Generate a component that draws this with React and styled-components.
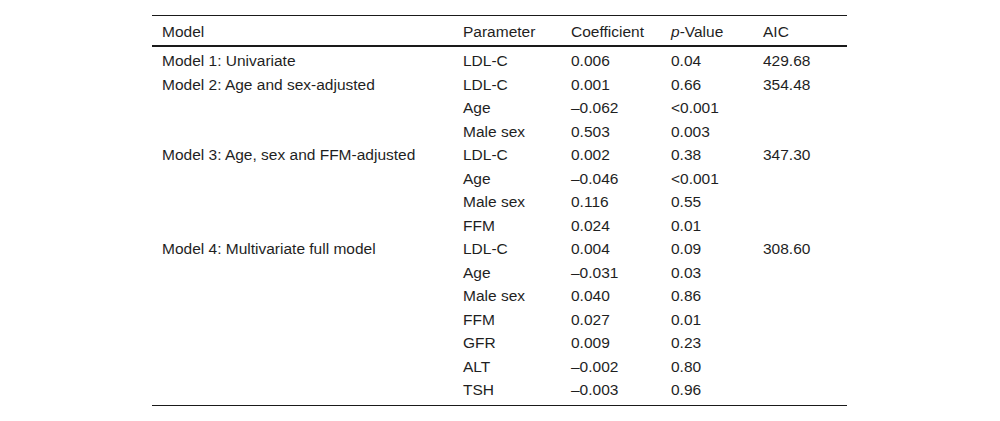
import React from 'react';
import styled, { createGlobalStyle } from 'styled-components';

const GlobalStyle = createGlobalStyle`
  html, body {
    margin: 0;
    padding: 0;
    background: #fff;
  }
  body {
    font-family: "Liberation Sans", Arial, sans-serif;
    color: #1f1f1f;
  }
`;

const Page = styled.div`
  width: 1000px;
  height: 421px;
  padding-top: 15px;
  box-sizing: border-box;
  display: flex;
  justify-content: center;
`;

const Table = styled.table`
  width: 695px;
  margin-left: -1px;
  border-collapse: collapse;
  table-layout: fixed;
  font-size: 15.5px;
  border-top: 1px solid #1a1a1a;
  border-bottom: 1px solid #1a1a1a;
  align-self: flex-start;
`;

const HeadCell = styled.th`
  text-align: left;
  font-weight: normal;
  padding: 7px 10px 4px 10px;
  line-height: 18px;
  border-bottom: 2px solid #1a1a1a;
`;

const Cell = styled.td`
  padding: 3px 10px;
  line-height: 17.5px;
  vertical-align: top;
  white-space: nowrap;
`;

const Row = styled.tr`
  &:first-child ${Cell} {
    padding-top: 5px;
  }
  &:last-child ${Cell} {
    padding-bottom: 6px;
  }
`;

const Italic = styled.i`
  font-style: italic;
`;

const columns = [301, 108, 100, 92, 94];

const models = [
  {
    name: 'Model 1: Univariate',
    aic: '429.68',
    rows: [['LDL-C', '0.006', '0.04']],
  },
  {
    name: 'Model 2: Age and sex-adjusted',
    aic: '354.48',
    rows: [
      ['LDL-C', '0.001', '0.66'],
      ['Age', '\u20130.062', '<0.001'],
      ['Male sex', '0.503', '0.003'],
    ],
  },
  {
    name: 'Model 3: Age, sex and FFM-adjusted',
    aic: '347.30',
    rows: [
      ['LDL-C', '0.002', '0.38'],
      ['Age', '\u20130.046', '<0.001'],
      ['Male sex', '0.116', '0.55'],
      ['FFM', '0.024', '0.01'],
    ],
  },
  {
    name: 'Model 4: Multivariate full model',
    aic: '308.60',
    rows: [
      ['LDL-C', '0.004', '0.09'],
      ['Age', '\u20130.031', '0.03'],
      ['Male sex', '0.040', '0.86'],
      ['FFM', '0.027', '0.01'],
      ['GFR', '0.009', '0.23'],
      ['ALT', '\u20130.002', '0.80'],
      ['TSH', '\u20130.003', '0.96'],
    ],
  },
];

const bodyRows = models.flatMap(model =>
  model.rows.map((r, i) => ({
    key: `${model.name}-${i}`,
    model: i === 0 ? model.name : '',
    param: r[0],
    coef: r[1],
    p: r[2],
    aic: i === 0 ? model.aic : '',
  })),
);

export default function App() {
  return (
    <>
      <GlobalStyle />
      <Page>
        <Table>
          <colgroup>
            {columns.map((w, i) => (
              <col key={i} style={{ width: w }} />
            ))}
          </colgroup>
          <thead>
            <tr>
              <HeadCell>Model</HeadCell>
              <HeadCell>Parameter</HeadCell>
              <HeadCell>Coefficient</HeadCell>
              <HeadCell>
                <Italic>p</Italic>-Value
              </HeadCell>
              <HeadCell>AIC</HeadCell>
            </tr>
          </thead>
          <tbody>
            {bodyRows.map(row => (
              <Row key={row.key}>
                <Cell>{row.model}</Cell>
                <Cell>{row.param}</Cell>
                <Cell>{row.coef}</Cell>
                <Cell>{row.p}</Cell>
                <Cell>{row.aic}</Cell>
              </Row>
            ))}
          </tbody>
        </Table>
      </Page>
    </>
  );
}
